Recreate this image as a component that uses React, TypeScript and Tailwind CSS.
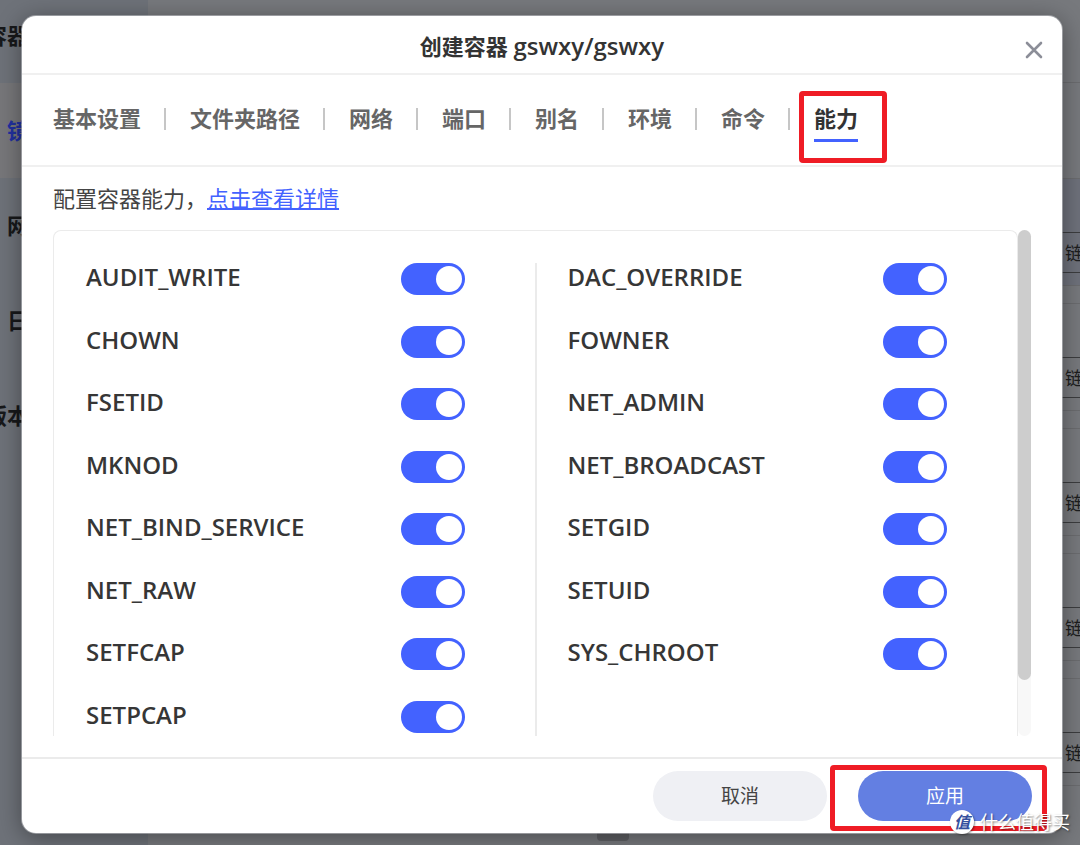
import { useState } from 'react';
import { clsx } from 'clsx';

type NavItem = { label: string; indent: string; active?: boolean };

const NAV_ITEMS: NavItem[] = [
  { label: '容器', indent: '-ml-[15px]' },
  { label: '镜像', indent: 'ml-[7px]', active: true },
  { label: '网络', indent: 'ml-[7px]' },
  { label: '日志', indent: 'ml-[7px]' },
  { label: '版本', indent: '-ml-[15px]' },
];

const IMAGES = ['image-1', 'image-2', 'image-3', 'image-4', 'image-5'];

const TABS = ['基本设置', '文件夹路径', '网络', '端口', '别名', '环境', '命令', '能力'];

const LEFT_CAPS = ['AUDIT_WRITE', 'CHOWN', 'FSETID', 'MKNOD', 'NET_BIND_SERVICE', 'NET_RAW', 'SETFCAP', 'SETPCAP'];
const RIGHT_CAPS = ['DAC_OVERRIDE', 'FOWNER', 'NET_ADMIN', 'NET_BROADCAST', 'SETGID', 'SETUID', 'SYS_CHROOT'];

function Background() {
  return (
    <div className="flex h-full overflow-hidden bg-[#77797d]">
      <nav className="-mt-3 w-[148px] shrink-0 bg-[#6e7279]">
        {NAV_ITEMS.map((item) => (
          <a key={item.label} href="#" className={clsx('flex h-[95px] items-center text-[22px] font-bold', item.active ? 'bg-[#77777a] text-[#2230a0]' : 'text-[#17181a]')}>
            <span className={clsx('whitespace-nowrap', item.indent)}>{item.label}</span>
          </a>
        ))}
      </nav>
      <main className="flex min-w-0 flex-1 flex-col">
        <div className="h-[83px] shrink-0 border-b border-[#6b6c6f]" />
        <div className="h-[95px] shrink-0" />
        <ul className="flex flex-col gap-[17px]">
          {IMAGES.map((id, i) => (
            <li key={id} className={clsx('flex h-[108px] items-start justify-end border-y border-[#6b6c6f] pt-[53px]', i === 0 && 'bg-[#6e717b]')}>
              <button className="-mr-10 h-[41px] w-20 border border-[#3c3d3f] pl-6 text-left text-lg whitespace-nowrap text-[#1d1e20]">链接</button>
            </li>
          ))}
        </ul>
        <div className="mt-auto mb-1 ml-[449px] h-10 w-8 shrink-0 rounded bg-[#5f6064]" />
      </main>
    </div>
  );
}

function Highlight({ className }: { className: string }) {
  return <span aria-hidden="true" className={clsx('pointer-events-none absolute rounded-sm border-[5px] border-[#ef1c25]', className)} />;
}

type ColumnProps = {
  names: string[];
  enabled: Record<string, boolean>;
  onToggle: (name: string) => void;
  className?: string;
};

function CapabilityColumn({ names, enabled, onToggle, className }: ColumnProps) {
  return (
    <div className={clsx('mt-[17px] grid h-[500px] grid-rows-8 pr-[70px]', className)}>
      {names.map((name) => (
        <label key={name} className="flex items-center justify-between text-2xl font-semibold text-[#363636]">
          <span className="pb-1">{name}</span>
          <input
            type="checkbox"
            role="switch"
            checked={enabled[name] ?? true}
            onChange={() => onToggle(name)}
            className="flex h-8 w-16 shrink-0 cursor-pointer appearance-none items-center rounded-full bg-[#cdcdcd] px-[3px] before:size-[26px] before:rounded-full before:bg-white checked:justify-end checked:bg-[#4362ff]"
          />
        </label>
      ))}
    </div>
  );
}

function Watermark() {
  return (
    <div className="pointer-events-none absolute right-[10px] bottom-[11px] flex items-center gap-[6px] text-white">
      <span className="flex size-6 items-center justify-center rounded-full bg-white text-base font-bold text-[#35509e] italic shadow-[1px_1px_2px_rgba(0,0,0,0.4)]">
        值
      </span>
      <span className="text-lg leading-6 [text-shadow:1px_1px_2px_rgba(0,0,0,0.5)]">什么值得买</span>
    </div>
  );
}

export default function App() {
  const [tab, setTab] = useState('能力');
  const [enabled, setEnabled] = useState<Record<string, boolean>>({});

  const toggle = (name: string) => setEnabled((prev) => ({ ...prev, [name]: !(prev[name] ?? true) }));

  return (
    <div className="relative h-screen overflow-hidden font-['Open_Sans','Noto_Sans_CJK_SC',sans-serif]">
      <Background />
      <div className="absolute inset-0 flex pt-4 pr-[18px] pb-3 pl-[22px]">
        <section role="dialog" aria-labelledby="dialog-title" className="flex min-w-0 flex-1 flex-col rounded-[14px] bg-white shadow-[0_0_0_1px_rgba(190,192,196,0.6),0_4px_24px_rgba(0,0,0,0.4)]">
          <header className="relative flex h-[59px] shrink-0 items-center justify-center border-b-2 border-[#f0f0f0]">
            <h1 id="dialog-title" className="pt-1 text-[22px] font-semibold text-[#333]">
              创建容器 <span className="text-2xl">gswxy/gswxy</span>
            </h1>
            <button aria-label="关闭" className="absolute top-[25px] right-[19px] text-[#8c8e98]">
              <svg viewBox="0 0 18 18" className="size-[18px]" fill="none" stroke="currentColor" strokeWidth="2.6" strokeLinecap="round">
                <path d="M2 2 16 16M16 2 2 16" />
              </svg>
            </button>
          </header>

          <nav className="flex h-[92px] shrink-0 items-center border-b-2 border-[#f0f0f0] px-[31px]">
            {TABS.map((name, i) => (
              <div key={name} className="relative flex items-center">
                {i > 0 && <span className="mr-6 mb-[3px] ml-[23px] h-[22px] w-0.5 bg-[#c6c6c6]" />}
                <button
                  onClick={() => setTab(name)}
                  className={clsx('h-[43px] border-b-[3px] border-transparent pb-0.5 text-[22px] leading-[38px] font-bold whitespace-nowrap', name === tab ? 'border-b-[#4362ff] text-[#333]' : 'text-[#666]')}
                >
                  {name}
                </button>
                {name === '能力' && <Highlight className="-top-[8px] -right-[29px] -bottom-[21px] left-[34px]" />}
              </div>
            ))}
          </nav>

          <div className="flex min-h-0 flex-1 flex-col px-[31px] pt-[15px] pb-[21px]">
            <p className="shrink-0 text-[22px] leading-8 font-normal text-[#444]">
              配置容器能力，<a href="#" className="text-[#4362ff] underline decoration-2">点击查看详情</a>
            </p>
            <div className="mt-4 flex min-h-0 flex-1">
              <div className="grid flex-1 grid-cols-[1fr_2px_1fr] overflow-hidden rounded-t-lg border border-b-0 border-[#ebebeb]">
                <CapabilityColumn names={LEFT_CAPS} enabled={enabled} onToggle={toggle} className="pl-8" />
                <div className="mt-8 bg-[#ebebeb]" />
                <CapabilityColumn names={RIGHT_CAPS} enabled={enabled} onToggle={toggle} className="pl-[31px]" />
              </div>
              <div className="w-[13px] rounded-full bg-[#f8f8f8]">
                <div className="h-[89%] rounded-full bg-[#cdcdcd]" />
              </div>
            </div>
          </div>

          <footer className="flex shrink-0 justify-end gap-[31px] border-t-2 border-[#ebebeb] px-[30px] py-3 text-[19px]">
            <button className="h-[50px] w-[174px] rounded-full bg-[#eff0f4] text-[#444]">取消</button>
            <div className="relative">
              <button className="h-[50px] w-[174px] rounded-full bg-[#637fe2] text-white">应用</button>
              <Highlight className="-top-[6px] -right-[15px] -bottom-[10px] -left-7" />
            </div>
          </footer>
        </section>
      </div>
      <Watermark />
    </div>
  );
}
